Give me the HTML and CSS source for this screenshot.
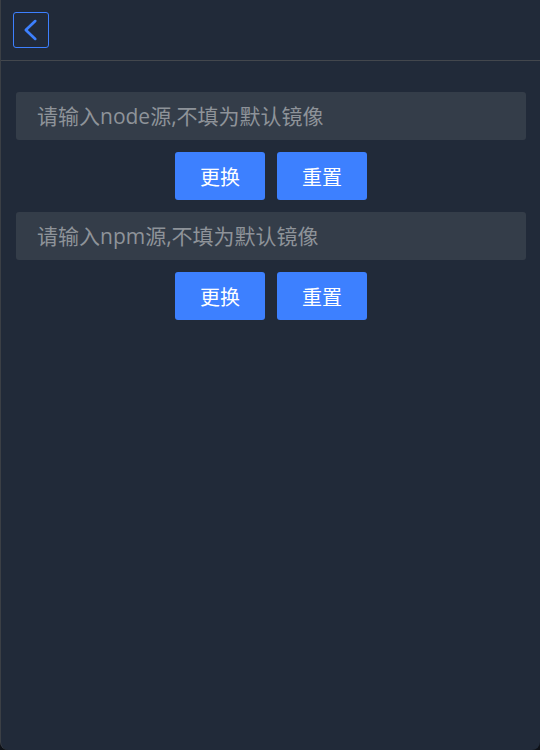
FILE: index.html
```html
<!DOCTYPE html>
<html lang="zh-CN">
<head>
<meta charset="utf-8">
<link rel="stylesheet" href="styles.css">
</head>
<body>
<div class="window">
  <header class="header">
    <button class="back" aria-label="返回">
      <svg width="36" height="36" viewBox="0 0 36 36"><path d="M22.5 8.5 L12.5 18 L22.5 27.5" fill="none" stroke="#3d80ff" stroke-width="2.8" stroke-linecap="round" stroke-linejoin="round"/></svg>
    </button>
  </header>
  <main class="content">
    <div class="field">请输入node源,不填为默认镜像</div>
    <div class="actions">
      <button class="btn">更换</button>
      <button class="btn">重置</button>
    </div>
    <div class="field">请输入npm源,不填为默认镜像</div>
    <div class="actions">
      <button class="btn">更换</button>
      <button class="btn">重置</button>
    </div>
  </main>
</div>
</body>
</html>
```
FILE: styles.css
```css
html, body {
  margin: 0;
  padding: 0;
  background: #0e1117;
}
body {
  font-family: "Open Sans", "Noto Sans CJK SC", sans-serif;
}
.window {
  width: 540px;
  height: 750px;
  box-sizing: border-box;
  background: #212a39;
  border-left: 1px solid #3b3f45;
  border-radius: 0 0 8px 8px;
  overflow: hidden;
}
.header {
  height: 61px;
  border-bottom: 1px solid #43474d;
  box-sizing: border-box;
  padding: 12px 0 0 12px;
}
.back {
  width: 36px;
  height: 36px;
  padding: 0;
  margin: 0;
  background: transparent;
  border: 1px solid #3d80ff;
  border-radius: 3px;
  display: flex;
  align-items: center;
  justify-content: center;
  box-sizing: border-box;
}
.back svg { display: block; }
.content {
  padding: 31px 14px 0 15px;
  display: flex;
  flex-direction: column;
  gap: 12px;
}
.field {
  height: 48px;
  background: #343d49;
  border-radius: 3px;
  color: #8e9399;
  font-size: 21px;
  line-height: 48px;
  padding-left: 21px;
}
.actions {
  display: flex;
  justify-content: center;
  gap: 12px;
}
.btn {
  width: 90px;
  height: 48px;
  border: none;
  border-radius: 3px;
  background: #3d80ff;
  color: #ffffff;
  font-family: "Noto Sans CJK SC", sans-serif;
  font-size: 20px;
  padding: 0;
}
```
